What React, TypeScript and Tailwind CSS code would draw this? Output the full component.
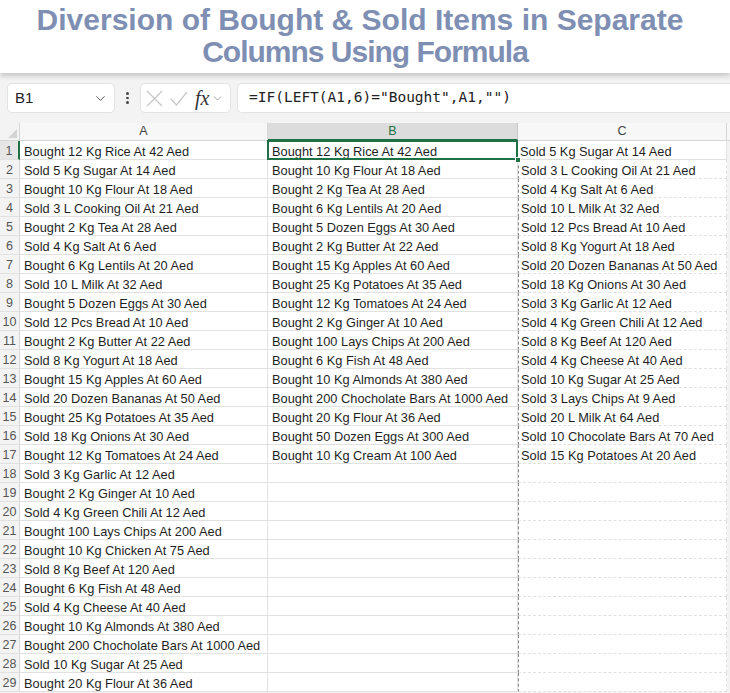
import React from 'react';
import { ChevronDown } from "lucide-react";

const colA = [
  "Bought 12 Kg Rice At 42 Aed",
  "Sold 5 Kg Sugar At 14 Aed",
  "Bought 10 Kg Flour At 18 Aed",
  "Sold 3 L Cooking Oil At 21 Aed",
  "Bought 2 Kg Tea At 28 Aed",
  "Sold 4 Kg Salt At 6 Aed",
  "Bought 6 Kg Lentils At 20 Aed",
  "Sold 10 L Milk At 32 Aed",
  "Bought 5 Dozen Eggs At 30 Aed",
  "Sold 12 Pcs Bread At 10 Aed",
  "Bought 2 Kg Butter At 22 Aed",
  "Sold 8 Kg Yogurt At 18 Aed",
  "Bought 15 Kg Apples At 60 Aed",
  "Sold 20 Dozen Bananas At 50 Aed",
  "Bought 25 Kg Potatoes At 35 Aed",
  "Sold 18 Kg Onions At 30 Aed",
  "Bought 12 Kg Tomatoes At 24 Aed",
  "Sold 3 Kg Garlic At 12 Aed",
  "Bought 2 Kg Ginger At 10 Aed",
  "Sold 4 Kg Green Chili At 12 Aed",
  "Bought 100 Lays Chips At 200 Aed",
  "Bought 10 Kg Chicken At 75 Aed",
  "Sold 8 Kg Beef At 120 Aed",
  "Bought 6 Kg Fish At 48 Aed",
  "Sold 4 Kg Cheese At 40 Aed",
  "Bought 10 Kg Almonds At 380 Aed",
  "Bought 200 Chocholate Bars At 1000 Aed",
  "Sold 10 Kg Sugar At 25 Aed",
  "Bought 20 Kg Flour At 36 Aed",
];

const colB = [
  "Bought 12 Kg Rice At 42 Aed",
  "Bought 10 Kg Flour At 18 Aed",
  "Bought 2 Kg Tea At 28 Aed",
  "Bought 6 Kg Lentils At 20 Aed",
  "Bought 5 Dozen Eggs At 30 Aed",
  "Bought 2 Kg Butter At 22 Aed",
  "Bought 15 Kg Apples At 60 Aed",
  "Bought 25 Kg Potatoes At 35 Aed",
  "Bought 12 Kg Tomatoes At 24 Aed",
  "Bought 2 Kg Ginger At 10 Aed",
  "Bought 100 Lays Chips At 200 Aed",
  "Bought 6 Kg Fish At 48 Aed",
  "Bought 10 Kg Almonds At 380 Aed",
  "Bought 200 Chocholate Bars At 1000 Aed",
  "Bought 20 Kg Flour At 36 Aed",
  "Bought 50 Dozen Eggs At 300 Aed",
  "Bought 10 Kg Cream At 100 Aed",
];

const colC = [
  "Sold 5 Kg Sugar At 14 Aed",
  "Sold 3 L Cooking Oil At 21 Aed",
  "Sold 4 Kg Salt At 6 Aed",
  "Sold 10 L Milk At 32 Aed",
  "Sold 12 Pcs Bread At 10 Aed",
  "Sold 8 Kg Yogurt At 18 Aed",
  "Sold 20 Dozen Bananas At 50 Aed",
  "Sold 18 Kg Onions At 30 Aed",
  "Sold 3 Kg Garlic At 12 Aed",
  "Sold 4 Kg Green Chili At 12 Aed",
  "Sold 8 Kg Beef At 120 Aed",
  "Sold 4 Kg Cheese At 40 Aed",
  "Sold 10 Kg Sugar At 25 Aed",
  "Sold 3 Lays Chips At 9 Aed",
  "Sold 20 L Milk At 64 Aed",
  "Sold 10 Chocolate Bars At 70 Aed",
  "Sold 15 Kg Potatoes At 20 Aed",
];

const cell = "h-[19px] border-b border-r border-[#e1e1e1] bg-white pl-[4px] leading-[21px] whitespace-nowrap text-[#1f1f1f]";

const App: React.FC = () => {
  return (
    <div className="w-[730px] h-[693px] overflow-hidden bg-[#f3f3f3]" style={{ fontFamily: '"Liberation Sans", Arial, sans-serif' }}>
      {/* Title */}
      <div className="relative z-10 h-[73px] bg-white shadow-[0_3px_5px_rgba(0,0,0,0.18)] flex flex-col items-center pt-[4px]">
        <div className="text-[30px] leading-[32px] font-bold text-[#7e8fb3] -ml-[10px]">Diversion of Bought &amp; Sold Items in Separate</div>
        <div className="text-[30px] leading-[32px] font-bold text-[#7e8fb3] tracking-[-1px]">Columns Using Formula</div>
      </div>

      {/* Formula bar */}
      <div className="flex items-center h-[30px] mt-[10px] pl-[7px]">
        <div className="w-[108px] h-[30px] rounded-[5px] border border-[#e3e3e3] bg-white flex items-center justify-between pl-[7px] pr-[6px]">
          <span className="text-[15px] text-[#222]">B1</span>
          <ChevronDown className="w-[15px] h-[15px] text-[#555]" strokeWidth={1.6} />
        </div>
        <div className="w-[25px] flex flex-col items-center gap-[2px]">
          <span className="w-[2.5px] h-[2.5px] rounded-full bg-[#444]"></span>
          <span className="w-[2.5px] h-[2.5px] rounded-full bg-[#444]"></span>
          <span className="w-[2.5px] h-[2.5px] rounded-full bg-[#444]"></span>
        </div>
        <div className="w-[91px] h-[30px] rounded-[5px] border border-[#e3e3e3] bg-white flex items-center pl-[5px] gap-[7px]">
          <svg width="17" height="17" viewBox="0 0 17 17" fill="none" stroke="#c6c6c6" strokeWidth="1.2">
            <path d="M1 1 L16 16 M16 1 L1 16" />
          </svg>
          <svg width="18" height="15" viewBox="0 0 18 15" fill="none" stroke="#c6c6c6" strokeWidth="1.2">
            <path d="M1 8 L6.5 14 L17 1" />
          </svg>
          <span className="text-[20px] italic text-[#333] leading-none" style={{ fontFamily: '"Liberation Serif", serif' }}>fx</span>
          <ChevronDown className="w-[13px] h-[13px] text-[#888] -ml-[5px]" strokeWidth={1.4} />
        </div>
        <div className="flex-1 ml-[6px] h-[30px] rounded-l-[5px] border border-r-0 border-[#e3e3e3] bg-white flex items-center pl-[11px]">
          <span className="text-[14.5px] text-[#222]" style={{ fontFamily: '"DejaVu Sans Mono", monospace' }}>=IF(LEFT(A1,6)="Bought",A1,"")</span>
        </div>
      </div>

      {/* Grid */}
      <div className="mt-[10px] grid grid-cols-[20px_248px_250px_209px_1fr] text-[12.8px]">
        {/* header row */}
        <div className="relative h-[18px] bg-[#f3f3f3] border-b border-r border-[#d6d6d6]">
          <span className="absolute right-[2px] bottom-[2px] w-0 h-0 border-l-[9px] border-l-transparent border-b-[9px] border-b-[#d4d4d4]"></span>
        </div>
        <div className="h-[18px] bg-[#f7f7f7] border-b border-r border-[#d6d6d6] text-center text-[12.5px] leading-[17px] text-[#444]">A</div>
        <div className="h-[18px] bg-[#dcdcdc] border-b-2 border-b-[#1e7145] border-r border-r-[#c8c8c8] text-center text-[12.5px] leading-[17px] text-[#1e7145]">B</div>
        <div className="h-[18px] bg-[#f7f7f7] border-b border-r border-[#d6d6d6] text-center text-[12.5px] leading-[17px] text-[#444]">C</div>
        <div className="h-[18px] bg-[#f7f7f7] border-b border-[#d6d6d6]"></div>

        {colA.map((a, i) => (
          <React.Fragment key={i}>
            <div className={`h-[19px] border-b border-[#e1e1e1] text-center text-[12.5px] leading-[20px] text-[#555] ${i === 0 ? "bg-[#e6e6e6] border-r-2 border-r-[#1e7145]" : "bg-[#f3f3f3] border-r border-r-[#d6d6d6]"}`}>{i + 1}</div>
            <div className={cell}>{a}</div>
            {i === 0 ? (
              <div className={`${cell} relative`}>
                {colB[i]}
                <div className="absolute -left-[1px] -top-[1px] -right-[1px] -bottom-[1px] border-2 border-[#1e7145]"></div>
                <div className="absolute -right-[4px] -bottom-[4px] w-[6px] h-[6px] bg-[#1e7145] border border-white"></div>
              </div>
            ) : (
              <div className={cell}>{colB[i] ?? ""}</div>
            )}
            <div className={`h-[19px] border-b border-r border-[#e1e1e1] bg-white pl-[2px] leading-[21px] whitespace-nowrap text-[#1f1f1f] ${i === 0 ? "" : "border-l border-l-[#8a8a8a] border-dashed"}`}>{colC[i] ?? ""}</div>
            <div className="h-[19px] bg-[#f3f3f3]"></div>
          </React.Fragment>
        ))}
      </div>
    </div>
  );
};

export default App;
